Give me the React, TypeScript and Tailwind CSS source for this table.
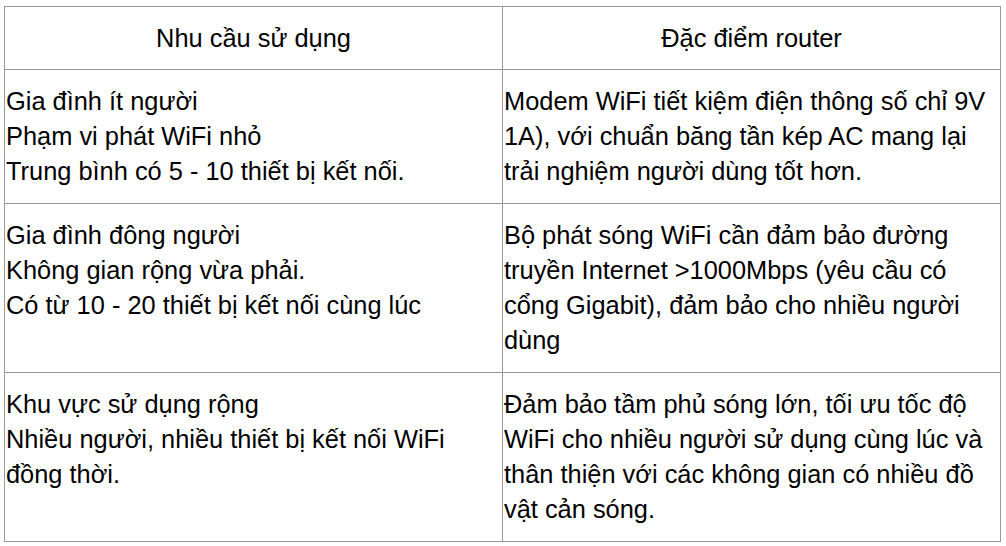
const rows: { need: string[]; router: string }[] = [
  {
    need: [
      "Gia đình ít người",
      "Phạm vi phát WiFi nhỏ",
      "Trung bình có 5 - 10 thiết bị kết nối.",
    ],
    router:
      "Modem WiFi tiết kiệm điện thông số chỉ 9V 1A), với chuẩn băng tần kép AC mang lại trải nghiệm người dùng tốt hơn.",
  },
  {
    need: [
      "Gia đình đông người",
      "Không gian rộng vừa phải.",
      "Có từ 10 - 20 thiết bị kết nối cùng lúc",
    ],
    router:
      "Bộ phát sóng WiFi cần đảm bảo đường truyền Internet >1000Mbps (yêu cầu có cổng Gigabit), đảm bảo cho nhiều người dùng",
  },
  {
    need: [
      "Khu vực sử dụng rộng",
      "Nhiều người, nhiều thiết bị kết nối WiFi đồng thời.",
    ],
    router:
      "Đảm bảo tầm phủ sóng lớn, tối ưu tốc độ WiFi cho nhiều người sử dụng cùng lúc và thân thiện với các không gian có nhiều đồ vật cản sóng.",
  },
];

export default function App() {
  return (
    <div
      className="h-[546px] w-[1006px] bg-white pl-[4px] pt-[6px] text-black"
      style={{ fontFamily: '"Liberation Sans", Arial, sans-serif' }}
    >
      <table className="w-[997px] table-fixed border-collapse text-[25.4px] leading-[35px]">
        <thead>
          <tr className="h-[63px]">
            <th className="border border-[#999] text-center font-normal">
              Nhu cầu sử dụng
            </th>
            <th className="border border-[#999] text-center font-normal">
              Đặc điểm router
            </th>
          </tr>
        </thead>
        <tbody>
          {rows.map((r, i) => (
            <tr key={i}>
              <td className="border border-[#999] py-[14px] pl-[1px] pr-2 align-top">
                {r.need.map((l) => (
                  <div key={l}>{l}</div>
                ))}
              </td>
              <td className="border border-[#999] py-[14px] pl-[1px] pr-2 align-top">
                {r.router}
              </td>
            </tr>
          ))}
        </tbody>
      </table>
    </div>
  );
}
